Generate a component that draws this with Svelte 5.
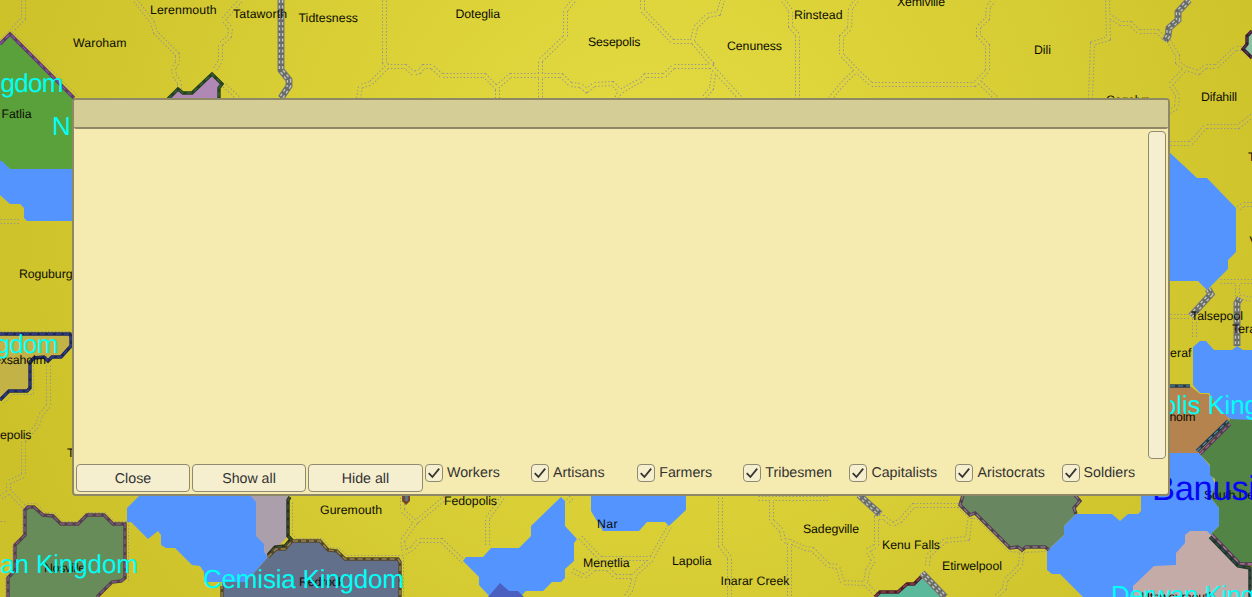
<script>
  const groups = ['Workers', 'Artisans', 'Farmers', 'Tribesmen', 'Capitalists', 'Aristocrats', 'Soldiers'];
  let checked = $state(groups.map(() => true));
  const setAll = (value) => { checked = groups.map(() => value); };

  const borders = [
    '23,0 23,18 12,29',
    '135,0 152,22 155,32 177,54 177,62 173,68 174,75 179,82 179,90',
    '240,0 223,19 230,28 229,36 220,44 220,60 214,70',
    '224,85 238,98',
    '384,0 384,62 387,66 370,83 360,86 358,98',
    '387,66 405,66 413,73 419,71 423,66 431,66 441,75 484,75 497,88 497,98',
    '497,86 510,75 561,75 570,84 580,85 586,90 594,84 612,83 620,91 632,84 640,80 645,75 664,75 673,66 709,66 711,63 692,41 672,41 642,10 642,0',
    '573,0 565,10 565,36 540,60 540,98',
    '692,40 695,27 707,15 718,13 722,0',
    '711,66 740,98', '713,74 711,88 703,98', '620,90 616,98',
    '783,0 790,10 790,26 797,34 797,98',
    '856,0 850,8 849,28 841,36 841,54 856,70 871,84 974,84 987,70 987,45 978,35 978,27 987,18 988,6 993,0',
    '856,70 845,80 838,88 830,98', '977,80 996,98',
    '1107,0 1108,38 1092,43 1090,98',
    '1108,15 1120,23 1130,23 1138,31 1157,31 1163,37',
    '1168,40 1177,55 1177,62 1185,68 1170,84 1177,95 1176,107 1168,112',
    '1185,68 1198,72 1205,66 1216,66 1235,48 1246,48',
    '1170,143 1190,143 1205,126 1238,126 1252,115',
    '1238,208 1243,204 1252,204', '1220,281 1252,281', '1237,281 1237,296 1252,299',
    '1170,316 1190,316', '1194,318 1194,338',
    '0,221 20,221', '48,365 48,405 40,415 37,425 23,440 23,475 8,482 8,492 0,497', '8,490 25,508',
    '402,497 402,510 415,522 402,540 404,552', '415,522 445,497', '404,552 412,548 418,540 441,540 463,561',
    '502,497 487,518 487,546', '571,497 566,502',
    '580,537 594,552 600,558 651,558 661,540 669,526',
    '572,570 584,576 594,568 607,568 615,576 632,576 651,559', '634,576 630,590 625,597',
    '720,497 720,545 729,557 729,597', '758,498 829,498',
    '771,498 771,520 781,530 783,540 789,541 789,597',
    '789,541 805,548 812,549 828,565 837,566 842,582 865,583 867,570 873,560 867,550 876,545 876,517 883,517 892,524 900,520 913,505 960,505',
    '865,583 878,597', '927,565 928,555 945,540 967,538 970,515',
    '1021,553 1020,565 1005,580 1004,588 995,597'
  ];

  const fringes = [
    '0,39 10,29 78,96', '0,331 72,331', '33,365 33,394 12,394 2,404',
    '0,521 5,521', '22,535 22,508 28,503 36,503 45,512 55,513 62,521 77,521 86,512 105,512 114,521 128,521 128,580',
    '22,537 12,546 12,568 5,576 5,597',
    '292,502 292,534 296,538 322,538 330,547 339,548 347,555 403,555 403,597',
    '957,507 969,518 976,518 1008,551 1022,552 1045,551'
  ];

  const regions = [
    ['#5aa13b', '0,42 10,34 74,98 74,170 10,169 0,161'],
    ['#5494ff', '0,161 2,161 10,169 74,169 74,221 27,221 24,218 24,208 20,204 10,204 0,195'],
    ['#b088b5', '168,99 178,89 183,93 192,93 212,73 223,84 219,88 219,99'],
    ['#c3b246', '0,334 70,334 72,337 72,346 61,357 50,360 45,357 30,360 30,390 9,391 0,400'],
    ['#678c59', '8,597 8,578 15,570 15,545 25,535 25,510 28,507 34,507 43,515 53,516 61,524 78,524 87,515 104,515 113,524 125,524 125,578 121,581 112,582 97,597'],
    ['#ab9fab', '251,494 290,494 288,500 288,536 268,557 250,550'],
    ['#5494ff', '141,494 127,508 127,522 131,522 148,539 158,531 161,535 161,545 166,548 175,548 192,565 200,566 204,572 204,582 246,582 268,557 264,552 264,544 256,536 256,502 249,494'],
    ['#63708c', '268,557 276,549 285,549 292,541 320,541 328,550 337,551 345,559 400,559 400,597 222,597 222,582 246,582'],
    ['#5494ff', '561,497 565,501 565,526 577,539 574,543 574,561 565,569 565,578 561,582 552,582 543,591 526,591 520,597 490,597 479,585 479,577 463,561 466,557 483,557 491,548 519,548 531,536 531,526'],
    ['#4a5fc0', '488,597 500,583 509,591 518,591 524,597'],
    ['#5494ff', '591,494 686,494 686,510 669,526 665,522 647,522 639,531 603,531 591,511'],
    ['#68865f', '963,494 1074,494 1080,501 1074,508 1076,514 1064,526 1064,535 1048,550 1045,547 1026,547 1022,549 1010,548 975,513 970,515 960,505'],
    ['#5494ff', '1164,453 1199,453 1210,466 1212,475 1215,485 1211,498 1219,508 1219,526 1211,534 1240,564 1140,597 1083,597 1060,574 1052,574 1047,570 1047,551 1064,535 1064,526 1076,514 1112,514 1120,521 1128,514 1138,514 1141,511 1141,494'],
    ['#c5aba8', '1185,535 1190,531 1207,531 1211,535 1240,564 1252,568 1252,597 1133,597 1133,586 1154,566 1176,565 1176,553 1185,543'],
    ['#518445', '1252,419 1230,419 1199,453 1210,465 1210,475 1215,479 1215,485 1211,498 1219,508 1219,526 1211,534 1240,564 1252,564'],
    ['#b5834d', '1168,386 1190,386 1200,394 1208,394 1230,420 1199,453 1168,453'],
    ['#5494ff', '1193,347 1200,341 1206,341 1214,350 1232,350 1237,346 1243,350 1252,350 1252,420 1230,419 1219,409 1209,393 1200,393 1193,385'],
    ['#5494ff', '1168,151 1197,178 1207,178 1236,208 1236,252 1228,260 1228,269 1207,290 1198,281 1168,281'],
    ['#5bb99b', '875,597 880,592 898,592 907,584 914,584 922,575 944,597'],
    ['#89c4a0', '1252,31 1247,36 1247,44 1243,49 1252,58']
  ];

  const frontiers = [
    ['#5c3b68', '#8955a0', '0,44 10,34 74,98'],
    ['#243e20', '#3a6335', '168,99 178,89 183,93 192,93 212,74 222,84 219,88 219,99'],
    ['#202755', '#304292', '0,334 70,334 71,337 71,346 61,357 52,357 48,361 44,357 34,358 30,362 30,388 27,391 9,391 0,400'],
    ['#51404c', '#815b79', '8,597 8,578 15,570 15,545 25,535 25,510 28,507 34,507 43,515 53,516 61,524 78,524 87,515 104,515 113,524 125,524 125,578 121,581 112,582 97,597'],
    ['#263020', '#3d5632', '290,497 288,500 288,536 291,539 285,546 275,547 268,555'],
    ['#514629', '#9a8550', '268,557 276,549 285,549 292,541 320,541 328,550 337,551 345,559 398,559 400,562 400,597'],
    ['#514629', '#9a8550', '222,597 222,586'],
    ['#4d414e', '#8f7188', '963,495 960,505 970,515 975,513 1010,548 1018,547 1022,550 1026,547 1045,547 1049,550'],
    ['#4d414e', '#8f7188', '1075,495 1080,501 1074,508 1076,514'],
    ['#553e50', '#af74a1', '1212,535 1240,564 1252,564'],
    ['#1f342a', '#355345', '1210,537 1238,566 1250,568 1250,597'],
    ['#253744', '#3f7793', '1170,386 1190,386'],
    ['#253744', '#4c87a0', '1197,451 1228,421'],
    ['#563a50', '#a0678f', '1200,454 1230,424'],
    ['#42212a', '#9a3a4b', '875,597 880,592 898,592 907,584 914,584 922,576'],
    ['#351f32', '#633755', '1252,31 1247,36 1247,44 1243,49 1252,58']
  ];

  const roads = [
    '281,0 281,70 289,80 289,86 281,98',
    '1189,0 1178,12 1178,20 1169,28 1168,36 1165,41',
    '859,495 880,514', '922,573 945,597', '1208,289 1211,294 1191,316', '1240,298 1237,303 1237,346'
  ];

  // name, left edge, baseline, width
  const towns = [
    ['Waroham', 73, 47, 53.5], ['Lerenmouth', 150, 14, 66.5], ['Tataworth', 233, 18, 54], ['Tidtesness', 298.5, 22, 59.5],
    ['Doteglia', 455.5, 18, 44.5], ['Sesepolis', 588, 46, 52.5], ['Cenuness', 727, 50, 55], ['Rinstead', 794, 19, 48.5],
    ['Xemiville', 897, 6, 48], ['Dili', 1034, 54, 17], ['Cogolyn', 1106, 104, 44], ['Difahill', 1201, 101, 36],
    ['Fatlia', 1.5, 118, 30], ['Roguburg', 19, 278, 53.5], ['exsaholm', -6, 364, 52], ['sepolis', -6, 439, 37.5],
    ['Tor', 67, 457, 18], ['Nosville', 44, 572, 41], ['Guremouth', 320, 514, 62], ['Redrock', 299, 586, 45],
    ['Fedopolis', 444, 505, 53], ['Nar', 597, 528, 20.5], ['Menetlia', 583, 567, 46.5], ['Lapolia', 672, 565, 39.5],
    ['Inarar Creek', 720.5, 585, 69], ['Sadegville', 803, 533, 56], ['Kenu Falls', 882, 549, 58], ['Etirwelpool', 942, 570, 60],
    ['Talsepool', 1191, 320, 52], ['Tera', 1232, 333, 24], ['eraf', 1170, 357, 21.5], ['holm', 1169.5, 421, 26],
    ['South De', 1204, 499, 50], ['Utaweymouth', 1141, 601, 74], ['T', 1248, 161, 7.5], ['V', 1249.5, 245, 8]
  ];
  const realms = [
    ['Kingdom', -35, 92, 98.5], ['N', 52, 135, 19], ['Kingdom', -40, 353, 98.5], ['an Kingdom', 0, 573, 138],
    ['Cemisia Kingdom', 203, 588, 201], ['olis King', 1162, 414, 97], ['Derwan King', 1111, 604, 144]
  ];
</script>

<main>
  <svg class="map" viewBox="0 0 1252 597" width="1252" height="597">
    <defs>
      <radialGradient id="land" gradientUnits="userSpaceOnUse" cx="650" cy="190" r="690">
        <stop offset="0" stop-color="#e4db43" />
        <stop offset="0.4" stop-color="#dcd238" />
        <stop offset="0.8" stop-color="#d1c62e" />
        <stop offset="1" stop-color="#cdc12a" />
      </radialGradient>
    </defs>
    <rect width="1252" height="597" fill="url(#land)" />
    <g class="dots" transform="translate(0.5 0.5)">
      {#each borders as points}<polyline {points} />{/each}
    </g>
    <g class="core" transform="translate(0.5 0.5)">
      {#each borders as points}<polyline {points} />{/each}
    </g>
    <g class="fringe" transform="translate(0.5 0.5)">
      {#each fringes as points}<polyline {points} />{/each}
    </g>
    {#each regions as [fill, points]}<polygon {fill} {points} />{/each}
    {#each frontiers as [dark, light, points]}
      <polyline class="line" {points} stroke={dark} stroke-width="3.4" />
      <polyline class="line" {points} stroke={light} stroke-width="1.4" stroke-dasharray="5 3" />
    {/each}
    {#each roads as points}
      <polyline class="line" {points} stroke="#7b7c70" stroke-width="7" />
      <polyline class="line" {points} stroke="#636663" stroke-width="5" />
      <polyline class="line" {points} stroke="#c3c4be" stroke-width="4.5" stroke-dasharray="3 2.5" />
      <polyline class="line" {points} stroke="#6c706c" stroke-width="1.8" />
    {/each}
    <path d="M402 494h8v7l-4 4-4-4z" fill="#74452f" />
    <path d="M405 494h3v7h-3z" fill="#557582" />
    <g class="town">
      {#each towns as [name, x, y, width]}<text {x} {y} textLength={width}>{name}</text>{/each}
    </g>
    <g class="realm">
      {#each realms as [name, x, y, width]}<text {x} {y} textLength={width}>{name}</text>{/each}
    </g>
    <text class="capital" x="1152" y="500" textLength="104">Banusi</text>
  </svg>

  <section class="window">
    <header></header>
    <div class="content">
      <div class="list"></div>
      <div class="scrollbar"></div>
    </div>
    <footer>
      <div class="buttons">
        <button>Close</button>
        <button onclick={() => setAll(true)}>Show all</button>
        <button onclick={() => setAll(false)}>Hide all</button>
      </div>
      <div class="filters">
        {#each groups as group, i}
          <label>
            <input type="checkbox" bind:checked={checked[i]} />
            <span class="box">
              {#if checked[i]}
                <svg viewBox="0 0 18 18" width="18" height="18"><path d="M3.7 9.2 7.4 13 14.2 4.6" /></svg>
              {/if}
            </span>
            <span class="name">{group}</span>
          </label>
        {/each}
      </div>
    </footer>
  </section>
</main>

<style>
  :global(body) { margin: 0; overflow: hidden; }
  main { position: relative; width: 1252px; height: 597px; overflow: hidden; font-family: "Liberation Sans", Arial, sans-serif; text-rendering: geometricPrecision; }
  .map { display: block; }
  .dots polyline { fill: none; stroke: #96968f; stroke-width: 5; stroke-dasharray: 1.4 2; }
  .core polyline { fill: none; stroke: url(#land); stroke-width: 3; stroke-linecap: square; }
  .fringe polyline { fill: none; stroke: #96968a; stroke-width: 1; stroke-dasharray: 1.4 2; }
  .line { fill: none; }
  .town { font-size: 12.3px; fill: #0c0c04; }
  .realm { font-size: 26px; fill: #00fff6; }
  .capital { font-size: 34.5px; fill: #0606f5; }

  .window {
    position: absolute; left: 72px; top: 98px; width: 1098px; height: 398px;
    box-sizing: border-box; display: flex; flex-direction: column;
    border: 2px solid #8f8866; border-radius: 4px; background: #f5eab0;
  }
  header { height: 27px; flex: none; background: #d5cd96; border-bottom: 2px solid #8f8866; border-radius: 2px; }
  .content { flex: 1; display: flex; padding: 2px 2px 0 2px; }
  .list { flex: 1; }
  .scrollbar { width: 18px; height: 328px; box-sizing: border-box; border: 1px solid #8f8a70; border-radius: 4px; background: #f5efd0; }
  footer { height: 30px; flex: none; display: flex; padding: 0 0 0 2px; }
  .buttons { display: flex; gap: 2px; }
  button {
    width: 114px; height: 28px; padding: 2px 0 0; box-sizing: border-box; border: 1px solid #8f8a70; border-radius: 4px;
    background: #f5efd0; color: #323232; font: 14.2px "Liberation Sans", Arial, sans-serif; text-rendering: geometricPrecision;
  }
  button:last-child { width: 115px; }
  .filters { display: flex; margin-left: 2px; }
  label { display: flex; width: 106.1px; color: #323232; font-size: 14.2px; letter-spacing: 0.03px; }
  input { display: none; }
  .box { width: 18px; height: 18px; box-sizing: border-box; flex: none; border: 1px solid #8f8a70; border-radius: 4px; background: #f5efd0; }
  .box svg { display: block; margin: -1px; }
  .box path { fill: none; stroke: #37352f; stroke-width: 1.8; }
  .name { margin-left: 4px; line-height: 18px; }
</style>
